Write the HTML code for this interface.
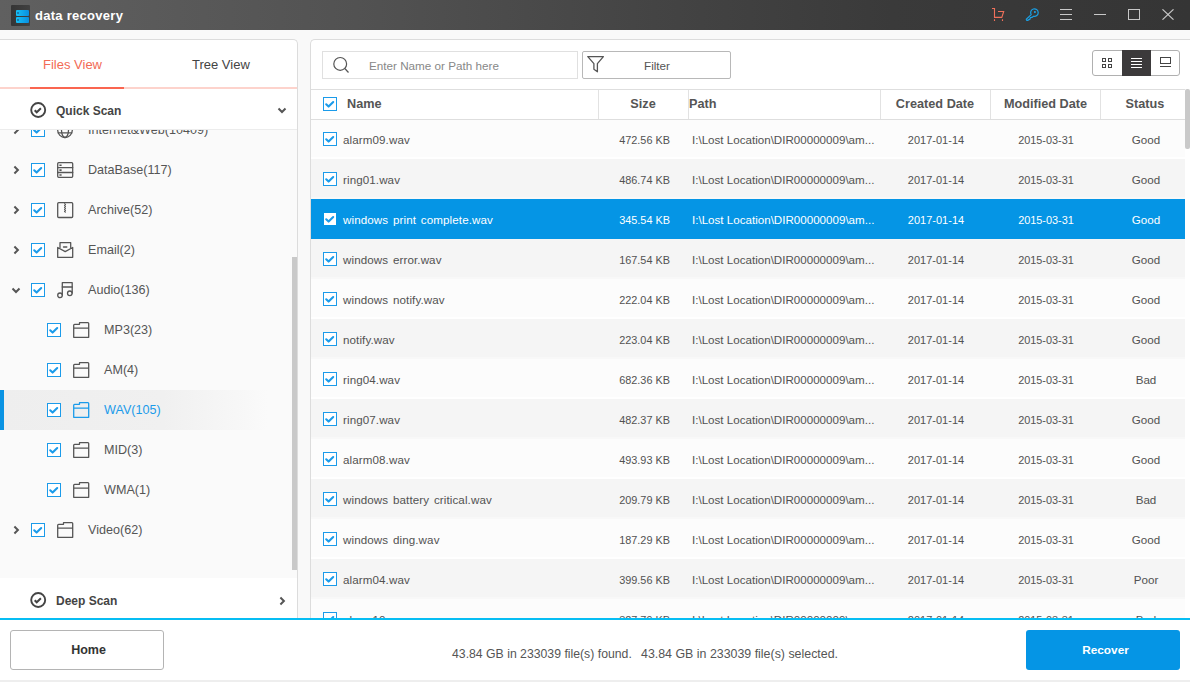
<!DOCTYPE html>
<html><head><meta charset="utf-8"><style>
*{box-sizing:border-box;margin:0;padding:0}
html,body{width:1190px;height:682px;overflow:hidden;background:#f9f9f9;font-family:"Liberation Sans",sans-serif;color:#555}
.abs{position:absolute}
svg{display:block}
#title{position:absolute;left:0;top:0;width:1190px;height:30px;background:linear-gradient(90deg,#606060 0%,#525252 30%,#444 55%,#3a3a3a 75%,#353535 100%)}
#left{position:absolute;left:0;top:39px;width:298px;height:580px;background:#fff;border-top:1px solid #dcdcdc;border-right:1px solid #dcdcdc;border-top-right-radius:5px;overflow:hidden}
#right{position:absolute;left:310px;top:39px;width:880px;height:580px;background:#fff;border-top:1px solid #dcdcdc;border-left:1px solid #dcdcdc;border-top-left-radius:5px;overflow:hidden}
.tab{position:absolute;top:17px;font-size:13px;line-height:16px}
.row{position:absolute;left:0;width:874px;height:40px;background:#fcfcfc;box-shadow:inset 0 -2px 0 #ffffff;font-size:11.6px;color:#525252}
.row.alt{background:#f5f5f5;box-shadow:inset 0 -2px 0 #f8f8f8}
.row.sel{background:#0595e5;color:#fff;box-shadow:none}
.row span{position:absolute;top:1px;line-height:40px;white-space:nowrap}
.c-name{left:32px;letter-spacing:0.1px;word-spacing:1.5px}
.c-size{left:289px;width:70px;text-align:right;font-size:10.9px}
.c-path{left:381px}
.c-cd{left:570px;width:110px;text-align:center;font-size:11px}
.c-md{left:680px;width:110px;text-align:center;font-size:10.9px}
.c-st{left:790px;width:90px;text-align:center}
.hdr{position:absolute;top:49px;left:0;width:874px;height:31px;border-top:1px solid #dedede;border-bottom:1px solid #dedede;background:#fff;font-weight:bold;font-size:12.7px;color:#555}
.hdr span{position:absolute;top:0px;line-height:29px}
.hdr .sep{position:absolute;top:0;width:1px;height:29px;background:#e2e2e2}
.tree{position:absolute;left:0;top:90px;width:297px;height:448px;background:#fafafa;overflow:hidden}
.ti{position:absolute;left:0;width:297px;height:40px}
.ttxt{top:0;line-height:40px;font-size:12.6px;white-space:nowrap}
</style></head><body>
<div id="title">
  <div class="abs" style="left:11px;top:5px;width:19px;height:21px;background:linear-gradient(90deg,#353535,#414141);border-radius:1px"></div>
  <div class="abs" style="left:16px;top:10px;width:13px;height:6px;background:linear-gradient(90deg,#16c0f6,#0a8fe0);border-radius:1px"></div>
  <div class="abs" style="left:16px;top:17px;width:13px;height:6px;background:linear-gradient(90deg,#16c0f6,#0a8fe0);border-radius:1px"></div>
  <div class="abs" style="left:17px;top:12px;width:2px;height:2px;background:#1670a0;opacity:.8"></div>
  <div class="abs" style="left:17px;top:19px;width:2px;height:2px;background:#1670a0;opacity:.8"></div>
  <div class="abs" style="left:35px;top:8px;font-size:13px;line-height:16px;font-weight:bold;color:#fff;letter-spacing:0.28px">data recovery</div>
  <svg class="abs" style="left:990px;top:7px" width="16" height="16" viewBox="0 0 16 16"><path d="M2 1.5H4.5V10.4H11.8L13.7 4.5H8" fill="none" stroke="#f0705a" stroke-width="1.1" stroke-linejoin="miter"/><path d="M4.5 12.2V14M12.5 12.2V14" stroke="#f0705a" stroke-width="1.1"/></svg>
  <svg class="abs" style="left:1024px;top:7px" width="17" height="16" viewBox="0 0 17 16"><path d="M7.2 7.6A3.8 3.8 0 1 1 9.6 9.3L7.9 10.4L6.4 10.6L6 12.1L3.6 13.4Q2.4 13.6 2.3 12.2Z" fill="none" stroke="#1a9fe3" stroke-width="1.2" stroke-linejoin="round"/><rect x="10" y="4.1" width="1.8" height="1.8" fill="#1a9fe3"/></svg>
  <div class="abs" style="left:1060px;top:9px;width:12px;height:1px;background:#c8c8c8"></div>
  <div class="abs" style="left:1060px;top:14px;width:12px;height:1px;background:#c8c8c8"></div>
  <div class="abs" style="left:1060px;top:19px;width:12px;height:1px;background:#c8c8c8"></div>
  <div class="abs" style="left:1094px;top:14px;width:12px;height:1px;background:#c8c8c8"></div>
  <div class="abs" style="left:1128px;top:9px;width:12px;height:11px;border:1px solid #c8c8c8"></div>
  <svg class="abs" style="left:1162px;top:9px" width="12" height="11" viewBox="0 0 12 11"><path d="M0.5 0.3L11.5 10.7M11.5 0.3L0.5 10.7" stroke="#c8c8c8" stroke-width="1.1"/></svg>
</div>

<div id="left">
  <div class="tab" style="left:43px;color:#f26a55">Files View</div>
  <div class="tab" style="left:192px;color:#444">Tree View</div>
  <div class="abs" style="left:0;top:47px;width:297px;height:2px;background:#fdd3cc"></div>
  <div class="abs" style="left:30px;top:47px;width:94px;height:2px;background:#fa6550"></div>
  <div class="abs" style="left:0;top:49px;width:297px;height:41px;background:#fff;border-bottom:1px solid #ececec"></div>
  <div class="abs" style="left:30px;top:62px"><svg width="18" height="18" viewBox="0 0 18 18"><circle cx="8.2" cy="8" r="7" fill="none" stroke="#444" stroke-width="1.9"/><path d="M4.7 8.3L6.7 10.3L10.9 6.2" fill="none" stroke="#444" stroke-width="2"/></svg></div>
  <div class="abs" style="left:56px;top:63px;font-size:12px;line-height:16px;font-weight:bold;color:#444">Quick Scan</div>
  <div class="abs" style="left:277px;top:66.7px"><svg width="10" height="8" viewBox="0 0 10 8"><path d="M1.5 1.5L5 5L8.5 1.5" fill="none" stroke="#555" stroke-width="2"/></svg></div>
  <div class="tree">
<div class="ti" style="top:-20px"><div class="abs" style="left:13px;top:15px"><svg width="8" height="10" viewBox="0 0 8 10"><path d="M1.4 1.5L4.9 5L1.4 8.5" fill="none" stroke="#555" stroke-width="2"/></svg></div><div class="abs" style="left:31px;top:13px;width:14px;height:14px;border:1px solid #1b9bea;background:#fff"><svg style="position:absolute;left:-1px;top:-1px" width="14" height="14" viewBox="0 0 14 14"><path d="M3.2 7.3 L5.6 9.6 L10.2 5" fill="none" stroke="#1b9bea" stroke-width="2.1" stroke-linecap="round" stroke-linejoin="round"/></svg></div><div class="abs" style="left:57px;top:12px"><svg width="18" height="18" viewBox="0 0 18 18"><circle cx="8" cy="8.2" r="7.3" fill="none" stroke="#555" stroke-width="1.3" stroke-linecap="round" stroke-linejoin="round"/><ellipse cx="8" cy="8.2" rx="3.5" ry="7.3" fill="none" stroke="#555" stroke-width="1.3" stroke-linecap="round" stroke-linejoin="round"/><path d="M1.3 10.9H14.7M1.3 5.5H14.7" fill="none" stroke="#555" stroke-width="1.3" stroke-linecap="round" stroke-linejoin="round"/></svg></div><div class="abs ttxt" style="left:88px;color:#555">Internet&amp;Web(10409)</div></div>
<div class="ti" style="top:20px"><div class="abs" style="left:13px;top:15px"><svg width="8" height="10" viewBox="0 0 8 10"><path d="M1.4 1.5L4.9 5L1.4 8.5" fill="none" stroke="#555" stroke-width="2"/></svg></div><div class="abs" style="left:31px;top:13px;width:14px;height:14px;border:1px solid #1b9bea;background:#fff"><svg style="position:absolute;left:-1px;top:-1px" width="14" height="14" viewBox="0 0 14 14"><path d="M3.2 7.3 L5.6 9.6 L10.2 5" fill="none" stroke="#1b9bea" stroke-width="2.1" stroke-linecap="round" stroke-linejoin="round"/></svg></div><div class="abs" style="left:57px;top:12px"><svg width="18" height="18" viewBox="0 0 18 18"><rect x="0.7" y="0.7" width="15" height="14.6" rx="1" fill="none" stroke="#555" stroke-width="1.3" stroke-linecap="round" stroke-linejoin="round"/><path d="M0.7 5.6H15.7M0.7 10.5H15.7" fill="none" stroke="#555" stroke-width="1.3" stroke-linecap="round" stroke-linejoin="round"/><path d="M2.4 3.2H4.6M2.4 8.1H4.6M2.4 13H4.6" fill="none" stroke="#555" stroke-width="1.6"/></svg></div><div class="abs ttxt" style="left:88px;color:#555">DataBase(117)</div></div>
<div class="ti" style="top:60px"><div class="abs" style="left:13px;top:15px"><svg width="8" height="10" viewBox="0 0 8 10"><path d="M1.4 1.5L4.9 5L1.4 8.5" fill="none" stroke="#555" stroke-width="2"/></svg></div><div class="abs" style="left:31px;top:13px;width:14px;height:14px;border:1px solid #1b9bea;background:#fff"><svg style="position:absolute;left:-1px;top:-1px" width="14" height="14" viewBox="0 0 14 14"><path d="M3.2 7.3 L5.6 9.6 L10.2 5" fill="none" stroke="#1b9bea" stroke-width="2.1" stroke-linecap="round" stroke-linejoin="round"/></svg></div><div class="abs" style="left:57px;top:12px"><svg width="18" height="18" viewBox="0 0 18 18"><rect x="0.7" y="0.7" width="15" height="14.8" rx="1" fill="none" stroke="#555" stroke-width="1.3" stroke-linecap="round" stroke-linejoin="round"/><path d="M7 1.5L9 2.5L7 3.5L9 4.5L7 5.5L9 6.5L7 7.5L9 8.5L7 9.5L9 10.3" fill="none" stroke="#555" stroke-width="1"/></svg></div><div class="abs ttxt" style="left:88px;color:#555">Archive(52)</div></div>
<div class="ti" style="top:100px"><div class="abs" style="left:13px;top:15px"><svg width="8" height="10" viewBox="0 0 8 10"><path d="M1.4 1.5L4.9 5L1.4 8.5" fill="none" stroke="#555" stroke-width="2"/></svg></div><div class="abs" style="left:31px;top:13px;width:14px;height:14px;border:1px solid #1b9bea;background:#fff"><svg style="position:absolute;left:-1px;top:-1px" width="14" height="14" viewBox="0 0 14 14"><path d="M3.2 7.3 L5.6 9.6 L10.2 5" fill="none" stroke="#1b9bea" stroke-width="2.1" stroke-linecap="round" stroke-linejoin="round"/></svg></div><div class="abs" style="left:57px;top:12px"><svg width="18" height="18" viewBox="0 0 18 18"><path d="M3 5.5V0.7H13.7V5.5" fill="none" stroke="#555" stroke-width="1.3" stroke-linecap="round" stroke-linejoin="round"/><path d="M0.7 5.5V15.3H15.7V5.5L8.2 9.6Z" fill="none" stroke="#555" stroke-width="1.3" stroke-linecap="round" stroke-linejoin="round"/><path d="M6.5 5H9.8" fill="none" stroke="#555" stroke-width="1.3" stroke-linecap="round" stroke-linejoin="round"/></svg></div><div class="abs ttxt" style="left:88px;color:#555">Email(2)</div></div>
<div class="ti" style="top:140px"><div class="abs" style="left:11px;top:17px"><svg width="10" height="8" viewBox="0 0 10 8"><path d="M1.5 1.5L5 5L8.5 1.5" fill="none" stroke="#555" stroke-width="2"/></svg></div><div class="abs" style="left:31px;top:13px;width:14px;height:14px;border:1px solid #1b9bea;background:#fff"><svg style="position:absolute;left:-1px;top:-1px" width="14" height="14" viewBox="0 0 14 14"><path d="M3.2 7.3 L5.6 9.6 L10.2 5" fill="none" stroke="#1b9bea" stroke-width="2.1" stroke-linecap="round" stroke-linejoin="round"/></svg></div><div class="abs" style="left:57px;top:12px"><svg width="18" height="18" viewBox="0 0 18 18"><path d="M5.3 13V0.7H15.2V11" fill="none" stroke="#555" stroke-width="1.3" stroke-linecap="round" stroke-linejoin="round"/><path d="M5.3 5H15.2" fill="none" stroke="#555" stroke-width="1.3" stroke-linecap="round" stroke-linejoin="round"/><circle cx="3" cy="13.3" r="2.3" fill="none" stroke="#555" stroke-width="1.3" stroke-linecap="round" stroke-linejoin="round"/><circle cx="12.8" cy="11.3" r="2.3" fill="none" stroke="#555" stroke-width="1.3" stroke-linecap="round" stroke-linejoin="round"/></svg></div><div class="abs ttxt" style="left:88px;color:#555">Audio(136)</div></div>
<div class="ti" style="top:180px"><div class="abs" style="left:47px;top:13px;width:14px;height:14px;border:1px solid #1b9bea;background:#fff"><svg style="position:absolute;left:-1px;top:-1px" width="14" height="14" viewBox="0 0 14 14"><path d="M3.2 7.3 L5.6 9.6 L10.2 5" fill="none" stroke="#1b9bea" stroke-width="2.1" stroke-linecap="round" stroke-linejoin="round"/></svg></div><div class="abs" style="left:73px;top:12px"><svg width="18" height="18" viewBox="0 0 18 18"><path d="M0.7 15.3V3.2Q0.7 2.3 1.6 2.3H6.5V0.7H14.9Q15.7 0.7 15.7 1.6V15.3Z M0.7 6.2H15.7" fill="none" stroke="#555" stroke-width="1.3" stroke-linejoin="round"/></svg></div><div class="abs ttxt" style="left:104px;color:#555">MP3(23)</div></div>
<div class="ti" style="top:220px"><div class="abs" style="left:47px;top:13px;width:14px;height:14px;border:1px solid #1b9bea;background:#fff"><svg style="position:absolute;left:-1px;top:-1px" width="14" height="14" viewBox="0 0 14 14"><path d="M3.2 7.3 L5.6 9.6 L10.2 5" fill="none" stroke="#1b9bea" stroke-width="2.1" stroke-linecap="round" stroke-linejoin="round"/></svg></div><div class="abs" style="left:73px;top:12px"><svg width="18" height="18" viewBox="0 0 18 18"><path d="M0.7 15.3V3.2Q0.7 2.3 1.6 2.3H6.5V0.7H14.9Q15.7 0.7 15.7 1.6V15.3Z M0.7 6.2H15.7" fill="none" stroke="#555" stroke-width="1.3" stroke-linejoin="round"/></svg></div><div class="abs ttxt" style="left:104px;color:#555">AM(4)</div></div>
<div class="ti" style="top:260px"><div class="abs" style="left:0;top:0;width:297px;height:40px;background:linear-gradient(90deg,#eeeeee 0%,#f0f0f0 55%,rgba(250,250,250,0) 90%)"></div><div class="abs" style="left:0;top:0;width:4px;height:40px;background:#0a93e3"></div><div class="abs" style="left:47px;top:13px;width:14px;height:14px;border:1px solid #1b9bea;background:#fff"><svg style="position:absolute;left:-1px;top:-1px" width="14" height="14" viewBox="0 0 14 14"><path d="M3.2 7.3 L5.6 9.6 L10.2 5" fill="none" stroke="#1b9bea" stroke-width="2.1" stroke-linecap="round" stroke-linejoin="round"/></svg></div><div class="abs" style="left:73px;top:12px"><svg width="18" height="18" viewBox="0 0 18 18"><path d="M0.7 15.3V3.2Q0.7 2.3 1.6 2.3H6.5V0.7H14.9Q15.7 0.7 15.7 1.6V15.3Z M0.7 6.2H15.7" fill="none" stroke="#1b9bea" stroke-width="1.3" stroke-linejoin="round"/></svg></div><div class="abs ttxt" style="left:104px;color:#1b9bea">WAV(105)</div></div>
<div class="ti" style="top:300px"><div class="abs" style="left:47px;top:13px;width:14px;height:14px;border:1px solid #1b9bea;background:#fff"><svg style="position:absolute;left:-1px;top:-1px" width="14" height="14" viewBox="0 0 14 14"><path d="M3.2 7.3 L5.6 9.6 L10.2 5" fill="none" stroke="#1b9bea" stroke-width="2.1" stroke-linecap="round" stroke-linejoin="round"/></svg></div><div class="abs" style="left:73px;top:12px"><svg width="18" height="18" viewBox="0 0 18 18"><path d="M0.7 15.3V3.2Q0.7 2.3 1.6 2.3H6.5V0.7H14.9Q15.7 0.7 15.7 1.6V15.3Z M0.7 6.2H15.7" fill="none" stroke="#555" stroke-width="1.3" stroke-linejoin="round"/></svg></div><div class="abs ttxt" style="left:104px;color:#555">MID(3)</div></div>
<div class="ti" style="top:340px"><div class="abs" style="left:47px;top:13px;width:14px;height:14px;border:1px solid #1b9bea;background:#fff"><svg style="position:absolute;left:-1px;top:-1px" width="14" height="14" viewBox="0 0 14 14"><path d="M3.2 7.3 L5.6 9.6 L10.2 5" fill="none" stroke="#1b9bea" stroke-width="2.1" stroke-linecap="round" stroke-linejoin="round"/></svg></div><div class="abs" style="left:73px;top:12px"><svg width="18" height="18" viewBox="0 0 18 18"><path d="M0.7 15.3V3.2Q0.7 2.3 1.6 2.3H6.5V0.7H14.9Q15.7 0.7 15.7 1.6V15.3Z M0.7 6.2H15.7" fill="none" stroke="#555" stroke-width="1.3" stroke-linejoin="round"/></svg></div><div class="abs ttxt" style="left:104px;color:#555">WMA(1)</div></div>
<div class="ti" style="top:380px"><div class="abs" style="left:13px;top:15px"><svg width="8" height="10" viewBox="0 0 8 10"><path d="M1.4 1.5L4.9 5L1.4 8.5" fill="none" stroke="#555" stroke-width="2"/></svg></div><div class="abs" style="left:31px;top:13px;width:14px;height:14px;border:1px solid #1b9bea;background:#fff"><svg style="position:absolute;left:-1px;top:-1px" width="14" height="14" viewBox="0 0 14 14"><path d="M3.2 7.3 L5.6 9.6 L10.2 5" fill="none" stroke="#1b9bea" stroke-width="2.1" stroke-linecap="round" stroke-linejoin="round"/></svg></div><div class="abs" style="left:57px;top:12px"><svg width="18" height="18" viewBox="0 0 18 18"><path d="M0.7 15.3V3.2Q0.7 2.3 1.6 2.3H6.5V0.7H14.9Q15.7 0.7 15.7 1.6V15.3Z M0.7 6.2H15.7" fill="none" stroke="#555" stroke-width="1.3" stroke-linejoin="round"/></svg></div><div class="abs ttxt" style="left:88px;color:#555">Video(62)</div></div>
  </div>
  <div class="abs" style="left:292px;top:217px;width:5px;height:313px;background:#c9c9c9"></div>
  <div class="abs" style="left:30px;top:552px"><svg width="18" height="18" viewBox="0 0 18 18"><circle cx="8.2" cy="8" r="7" fill="none" stroke="#444" stroke-width="1.9"/><path d="M4.7 8.3L6.7 10.3L10.9 6.2" fill="none" stroke="#444" stroke-width="2"/></svg></div>
  <div class="abs" style="left:56px;top:553px;font-size:12px;line-height:16px;font-weight:bold;color:#444">Deep Scan</div>
  <div class="abs" style="left:279px;top:555.5px"><svg width="8" height="10" viewBox="0 0 8 10"><path d="M1.4 1.5L4.9 5L1.4 8.5" fill="none" stroke="#555" stroke-width="2"/></svg></div>
</div>

<div id="right">
  <div class="abs" style="left:11px;top:11px;width:256px;height:28px;border:1px solid #e0e0e0"></div>
  <svg class="abs" style="left:21px;top:16px" width="20" height="20" viewBox="0 0 20 20"><circle cx="8.2" cy="7.9" r="6.4" fill="none" stroke="#555" stroke-width="1.2"/><path d="M12.8 12.5L16.5 16.5" stroke="#555" stroke-width="1.2"/></svg>
  <div class="abs" style="left:58px;top:19px;font-size:11.7px;line-height:14px;color:#888">Enter Name or Path here</div>
  <div class="abs" style="left:271px;top:11px;width:149px;height:28px;border:1px solid #b8b8b8;border-radius:2px"></div>
  <svg class="abs" style="left:275px;top:15px" width="20" height="20" viewBox="0 0 20 20"><path d="M1.8 1.6H17.4L11.4 8.6V16.8L7.9 14.3V8.6Z" fill="none" stroke="#555" stroke-width="1.3" stroke-linejoin="round"/></svg>
  <div class="abs" style="left:333px;top:19px;font-size:11.7px;line-height:14px;color:#555">Filter</div>
  <div class="abs" style="left:781px;top:10px;width:88px;height:26px;border:1px solid #b0b0b0;border-radius:3px"></div>
  <div class="abs" style="left:811px;top:10px;width:29px;height:26px;background:#3c3a3b"></div>
  <div class="abs" style="left:791px;top:18px;width:4px;height:4px;border:1px solid #444"></div>
  <div class="abs" style="left:797px;top:18px;width:4px;height:4px;border:1px solid #444"></div>
  <div class="abs" style="left:791px;top:24px;width:4px;height:4px;border:1px solid #444"></div>
  <div class="abs" style="left:797px;top:24px;width:4px;height:4px;border:1px solid #444"></div>
  <div class="abs" style="left:820px;top:18px;width:11px;height:1px;background:#fff"></div>
  <div class="abs" style="left:820px;top:21px;width:11px;height:1px;background:#fff"></div>
  <div class="abs" style="left:820px;top:24px;width:11px;height:1px;background:#fff"></div>
  <div class="abs" style="left:820px;top:27px;width:11px;height:1px;background:#fff"></div>
  <div class="abs" style="left:849px;top:17px;width:11px;height:7px;border:1px solid #444"></div>
  <div class="abs" style="left:849px;top:26px;width:11px;height:1px;background:#444"></div>
  <div class="hdr">
    <div class="abs" style="left:12px;top:7px;width:14px;height:14px;border:1px solid #1b9bea;background:#fff"><svg style="position:absolute;left:-1px;top:-1px" width="14" height="14" viewBox="0 0 14 14"><path d="M3.2 7.3 L5.6 9.6 L10.2 5" fill="none" stroke="#1b9bea" stroke-width="2.1" stroke-linecap="round" stroke-linejoin="round"/></svg></div>
    <span style="left:36px">Name</span>
    <div class="sep" style="left:287px"></div>
    <span style="left:302px;width:60px;text-align:center">Size</span>
    <div class="sep" style="left:377px"></div>
    <span style="left:378px">Path</span>
    <div class="sep" style="left:569px"></div>
    <span style="left:564px;width:120px;text-align:center">Created Date</span>
    <div class="sep" style="left:679px"></div>
    <span style="left:674px;width:121px;text-align:center">Modified Date</span>
    <div class="sep" style="left:789px"></div>
    <span style="left:784px;width:100px;text-align:center">Status</span>
  </div>
  <div class="abs" style="left:0;top:79px;width:880px;height:500px;overflow:hidden">
<div class="row" style="top:0px"><div class="abs" style="left:12px;top:13px;width:14px;height:14px;border:1px solid #1b9bea;background:#fff"><svg style="position:absolute;left:-1px;top:-1px" width="14" height="14" viewBox="0 0 14 14"><path d="M3.2 7.3 L5.6 9.6 L10.2 5" fill="none" stroke="#1b9bea" stroke-width="2.1" stroke-linecap="round" stroke-linejoin="round"/></svg></div><span class="c-name">alarm09.wav</span><span class="c-size">472.56 KB</span><span class="c-path">I:\Lost Location\DIR00000009\am...</span><span class="c-cd">2017-01-14</span><span class="c-md">2015-03-31</span><span class="c-st">Good</span></div>
<div class="row alt" style="top:40px"><div class="abs" style="left:12px;top:13px;width:14px;height:14px;border:1px solid #1b9bea;background:#fff"><svg style="position:absolute;left:-1px;top:-1px" width="14" height="14" viewBox="0 0 14 14"><path d="M3.2 7.3 L5.6 9.6 L10.2 5" fill="none" stroke="#1b9bea" stroke-width="2.1" stroke-linecap="round" stroke-linejoin="round"/></svg></div><span class="c-name">ring01.wav</span><span class="c-size">486.74 KB</span><span class="c-path">I:\Lost Location\DIR00000009\am...</span><span class="c-cd">2017-01-14</span><span class="c-md">2015-03-31</span><span class="c-st">Good</span></div>
<div class="row sel" style="top:80px"><div class="abs" style="left:13px;top:14px;width:12px;height:12px;background:#fff"><svg style="position:absolute;left:-1px;top:-1px" width="14" height="14" viewBox="0 0 14 14"><path d="M3.2 7.3 L5.6 9.6 L10.2 5" fill="none" stroke="#1b9bea" stroke-width="2.1" stroke-linecap="round" stroke-linejoin="round"/></svg></div><span class="c-name">windows print complete.wav</span><span class="c-size">345.54 KB</span><span class="c-path">I:\Lost Location\DIR00000009\am...</span><span class="c-cd">2017-01-14</span><span class="c-md">2015-03-31</span><span class="c-st">Good</span></div>
<div class="row alt" style="top:120px"><div class="abs" style="left:12px;top:13px;width:14px;height:14px;border:1px solid #1b9bea;background:#fff"><svg style="position:absolute;left:-1px;top:-1px" width="14" height="14" viewBox="0 0 14 14"><path d="M3.2 7.3 L5.6 9.6 L10.2 5" fill="none" stroke="#1b9bea" stroke-width="2.1" stroke-linecap="round" stroke-linejoin="round"/></svg></div><span class="c-name">windows error.wav</span><span class="c-size">167.54 KB</span><span class="c-path">I:\Lost Location\DIR00000009\am...</span><span class="c-cd">2017-01-14</span><span class="c-md">2015-03-31</span><span class="c-st">Good</span></div>
<div class="row" style="top:160px"><div class="abs" style="left:12px;top:13px;width:14px;height:14px;border:1px solid #1b9bea;background:#fff"><svg style="position:absolute;left:-1px;top:-1px" width="14" height="14" viewBox="0 0 14 14"><path d="M3.2 7.3 L5.6 9.6 L10.2 5" fill="none" stroke="#1b9bea" stroke-width="2.1" stroke-linecap="round" stroke-linejoin="round"/></svg></div><span class="c-name">windows notify.wav</span><span class="c-size">222.04 KB</span><span class="c-path">I:\Lost Location\DIR00000009\am...</span><span class="c-cd">2017-01-14</span><span class="c-md">2015-03-31</span><span class="c-st">Good</span></div>
<div class="row alt" style="top:200px"><div class="abs" style="left:12px;top:13px;width:14px;height:14px;border:1px solid #1b9bea;background:#fff"><svg style="position:absolute;left:-1px;top:-1px" width="14" height="14" viewBox="0 0 14 14"><path d="M3.2 7.3 L5.6 9.6 L10.2 5" fill="none" stroke="#1b9bea" stroke-width="2.1" stroke-linecap="round" stroke-linejoin="round"/></svg></div><span class="c-name">notify.wav</span><span class="c-size">223.04 KB</span><span class="c-path">I:\Lost Location\DIR00000009\am...</span><span class="c-cd">2017-01-14</span><span class="c-md">2015-03-31</span><span class="c-st">Good</span></div>
<div class="row" style="top:240px"><div class="abs" style="left:12px;top:13px;width:14px;height:14px;border:1px solid #1b9bea;background:#fff"><svg style="position:absolute;left:-1px;top:-1px" width="14" height="14" viewBox="0 0 14 14"><path d="M3.2 7.3 L5.6 9.6 L10.2 5" fill="none" stroke="#1b9bea" stroke-width="2.1" stroke-linecap="round" stroke-linejoin="round"/></svg></div><span class="c-name">ring04.wav</span><span class="c-size">682.36 KB</span><span class="c-path">I:\Lost Location\DIR00000009\am...</span><span class="c-cd">2017-01-14</span><span class="c-md">2015-03-31</span><span class="c-st">Bad</span></div>
<div class="row alt" style="top:280px"><div class="abs" style="left:12px;top:13px;width:14px;height:14px;border:1px solid #1b9bea;background:#fff"><svg style="position:absolute;left:-1px;top:-1px" width="14" height="14" viewBox="0 0 14 14"><path d="M3.2 7.3 L5.6 9.6 L10.2 5" fill="none" stroke="#1b9bea" stroke-width="2.1" stroke-linecap="round" stroke-linejoin="round"/></svg></div><span class="c-name">ring07.wav</span><span class="c-size">482.37 KB</span><span class="c-path">I:\Lost Location\DIR00000009\am...</span><span class="c-cd">2017-01-14</span><span class="c-md">2015-03-31</span><span class="c-st">Good</span></div>
<div class="row" style="top:320px"><div class="abs" style="left:12px;top:13px;width:14px;height:14px;border:1px solid #1b9bea;background:#fff"><svg style="position:absolute;left:-1px;top:-1px" width="14" height="14" viewBox="0 0 14 14"><path d="M3.2 7.3 L5.6 9.6 L10.2 5" fill="none" stroke="#1b9bea" stroke-width="2.1" stroke-linecap="round" stroke-linejoin="round"/></svg></div><span class="c-name">alarm08.wav</span><span class="c-size">493.93 KB</span><span class="c-path">I:\Lost Location\DIR00000009\am...</span><span class="c-cd">2017-01-14</span><span class="c-md">2015-03-31</span><span class="c-st">Good</span></div>
<div class="row alt" style="top:360px"><div class="abs" style="left:12px;top:13px;width:14px;height:14px;border:1px solid #1b9bea;background:#fff"><svg style="position:absolute;left:-1px;top:-1px" width="14" height="14" viewBox="0 0 14 14"><path d="M3.2 7.3 L5.6 9.6 L10.2 5" fill="none" stroke="#1b9bea" stroke-width="2.1" stroke-linecap="round" stroke-linejoin="round"/></svg></div><span class="c-name">windows battery critical.wav</span><span class="c-size">209.79 KB</span><span class="c-path">I:\Lost Location\DIR00000009\am...</span><span class="c-cd">2017-01-14</span><span class="c-md">2015-03-31</span><span class="c-st">Bad</span></div>
<div class="row" style="top:400px"><div class="abs" style="left:12px;top:13px;width:14px;height:14px;border:1px solid #1b9bea;background:#fff"><svg style="position:absolute;left:-1px;top:-1px" width="14" height="14" viewBox="0 0 14 14"><path d="M3.2 7.3 L5.6 9.6 L10.2 5" fill="none" stroke="#1b9bea" stroke-width="2.1" stroke-linecap="round" stroke-linejoin="round"/></svg></div><span class="c-name">windows ding.wav</span><span class="c-size">187.29 KB</span><span class="c-path">I:\Lost Location\DIR00000009\am...</span><span class="c-cd">2017-01-14</span><span class="c-md">2015-03-31</span><span class="c-st">Good</span></div>
<div class="row alt" style="top:440px"><div class="abs" style="left:12px;top:13px;width:14px;height:14px;border:1px solid #1b9bea;background:#fff"><svg style="position:absolute;left:-1px;top:-1px" width="14" height="14" viewBox="0 0 14 14"><path d="M3.2 7.3 L5.6 9.6 L10.2 5" fill="none" stroke="#1b9bea" stroke-width="2.1" stroke-linecap="round" stroke-linejoin="round"/></svg></div><span class="c-name">alarm04.wav</span><span class="c-size">399.56 KB</span><span class="c-path">I:\Lost Location\DIR00000009\am...</span><span class="c-cd">2017-01-14</span><span class="c-md">2015-03-31</span><span class="c-st">Poor</span></div>
<div class="row" style="top:480px"><div class="abs" style="left:12px;top:13px;width:14px;height:14px;border:1px solid #1b9bea;background:#fff"><svg style="position:absolute;left:-1px;top:-1px" width="14" height="14" viewBox="0 0 14 14"><path d="M3.2 7.3 L5.6 9.6 L10.2 5" fill="none" stroke="#1b9bea" stroke-width="2.1" stroke-linecap="round" stroke-linejoin="round"/></svg></div><span class="c-name">alarm10.wav</span><span class="c-size">327.79 KB</span><span class="c-path">I:\Lost Location\DIR00000009\am...</span><span class="c-cd">2017-01-14</span><span class="c-md">2015-03-31</span><span class="c-st">Bad</span></div>
  </div>
  <div class="abs" style="left:0;top:79px;width:874px;height:1px;background:#dedede"></div>
  <div class="abs" style="left:874px;top:49px;width:5px;height:60px;background:#c9c9c9;border-radius:2px"></div>
</div>

<div class="abs" style="left:0;top:618px;width:1190px;height:2px;background:#06bdf3"></div>
<div class="abs" style="left:0;top:620px;width:1190px;height:60px;background:#fff"></div>
<div class="abs" style="left:0;top:680px;width:1190px;height:2px;background:#eeeeee"></div>
<div class="abs" style="left:10px;top:630px;width:154px;height:40px;border:1px solid #b4b4b4;border-radius:3px;background:#fff;text-align:center;line-height:38px;font-size:12.5px;font-weight:bold;color:#333;padding-left:3px">Home</div>
<div class="abs" style="left:452px;top:646px;font-size:12.25px;line-height:16px;color:#555;white-space:pre">43.84 GB in 233039 file(s) found.</div><div class="abs" style="left:641px;top:646px;font-size:12.4px;line-height:16px;color:#555;white-space:pre">43.84 GB in 233039 file(s) selected.</div>
<div class="abs" style="left:1026px;top:630px;width:154px;height:40px;border-radius:3px;background:#0595e5;text-align:center;line-height:40px;font-size:11.8px;font-weight:bold;color:#fff;padding-left:5px">Recover</div>
</body></html>
